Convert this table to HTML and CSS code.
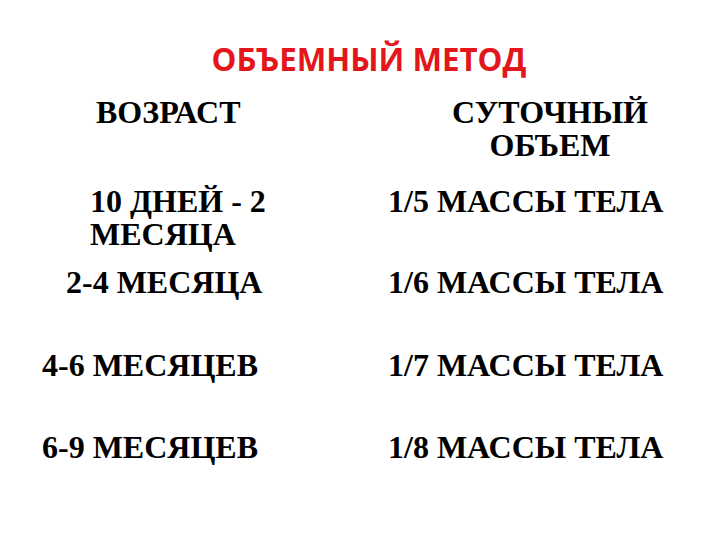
FILE: index.html
```html
<!DOCTYPE html>
<html lang="ru">
<head>
<meta charset="utf-8">
<link rel="stylesheet" href="styles.css">
</head>
<body>
<div class="slide">
  <h1 class="title">ОБЪЕМНЫЙ МЕТОД</h1>
  <div class="table">
    <div class="cell age head">ВОЗРАСТ</div>
    <div class="cell vol head">СУТОЧНЫЙ<br>ОБЪЕМ</div>
    <div class="cell age r1">10 ДНЕЙ - 2<br>МЕСЯЦА</div>
    <div class="cell vol">1/5 МАССЫ ТЕЛА</div>
    <div class="cell age r2">2-4 МЕСЯЦА</div>
    <div class="cell vol">1/6 МАССЫ ТЕЛА</div>
    <div class="cell age r3">4-6 МЕСЯЦЕВ</div>
    <div class="cell vol">1/7 МАССЫ ТЕЛА</div>
    <div class="cell age r3">6-9 МЕСЯЦЕВ</div>
    <div class="cell vol">1/8 МАССЫ ТЕЛА</div>
  </div>
</div>
</body>
</html>
```
FILE: styles.css
```css
html, body {
  margin: 0;
  padding: 0;
  background: #ffffff;
}
.slide {
  width: 720px;
  height: 540px;
  overflow: hidden;
}
.title {
  margin: 0;
  padding: 44px 0 0 18px;
  height: 52px;
  text-align: center;
  font-family: "Open Sans", sans-serif;
  font-weight: 700;
  font-size: 31.3px;
  line-height: 1;
  color: #e3161b;
}
.table {
  display: grid;
  grid-template-columns: 360px 360px;
  grid-template-rows: 89px 81px 83px 82px auto;
  font-family: "Liberation Serif", "Times New Roman", serif;
  font-weight: 700;
  font-size: 32px;
  line-height: 33px;
  color: #000000;
}
.cell {
  white-space: nowrap;
}
.age.head { padding-left: 96px; }
.age.r1 { padding-left: 90px; }
.age.r2 { padding-left: 66px; }
.age.r3 { padding-left: 42px; }
.vol { padding-left: 28px; }
.vol.head {
  width: 380px;
  padding-left: 0;
  text-align: center;
}
```
